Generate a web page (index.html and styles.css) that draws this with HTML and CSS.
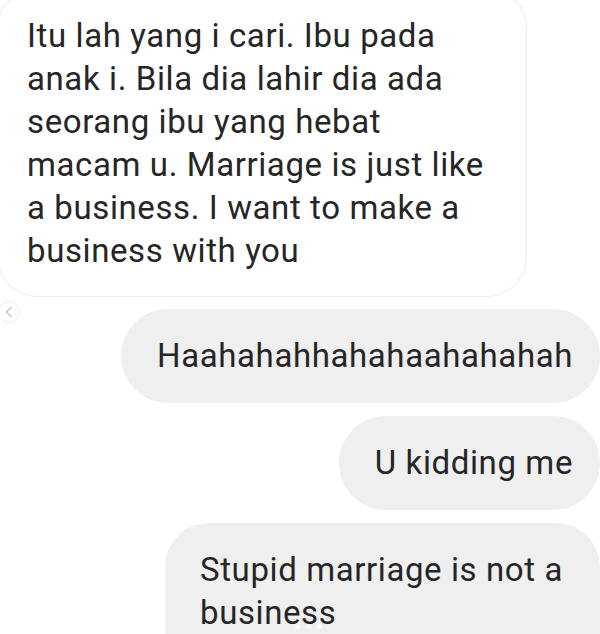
FILE: index.html
```html
<!DOCTYPE html>
<html>
<head>
<meta charset="utf-8">
<link rel="stylesheet" href="styles.css">
</head>
<body>
<div class="chat">
  <div class="msg-in">Itu lah yang i cari. Ibu pada<br>anak i. Bila dia lahir dia ada<br>seorang ibu yang hebat<br>macam u. Marriage is just like<br>a business. I want to make a<br>business with you</div>
  <div class="back"><svg width="10" height="12" viewBox="0 0 10 12"><path d="M7 1.5 L2.5 6 L7 10.5" fill="none" stroke="#c8c8c8" stroke-width="1.6" stroke-linecap="round" stroke-linejoin="round"/></svg></div>
  <div class="out-list">
    <div class="msg-out">Haahahahhahahaahahahah</div>
    <div class="msg-out">U kidding me</div>
    <div class="msg-out multi">Stupid marriage is not a<br>business</div>
  </div>
  <div class="dots"><span class="dot"></span><span class="dot"></span><span class="dot on"></span></div>
</div>
</body>
</html>
```
FILE: styles.css
```css
html, body {
  margin: 0;
  padding: 0;
  background: #ffffff;
  overflow: hidden;
}
.chat {
  position: relative;
  width: 600px;
  height: 634px;
  overflow: hidden;
  font-family: Roboto, "Noto Sans", sans-serif;
  font-size: 33px;
  letter-spacing: 0.6px;
  line-height: 43px;
  color: #262626;
}
.msg-in {
  box-sizing: border-box;
  width: 530px;
  margin: -12px 0 0 -3px;
  padding: 25px 20px 24px 29px;
  background: #ffffff;
  border: 1.5px solid #ebebeb;
  border-radius: 40px;
  white-space: nowrap;
}
.back {
  width: 20px;
  height: 20px;
  margin: 4px 0 0 -2px;
  border: 1.5px solid #ececec;
  border-radius: 50%;
  display: flex;
  align-items: center;
  justify-content: center;
}
.out-list {
  display: flex;
  flex-direction: column;
  align-items: flex-end;
  gap: 13px;
  margin-top: -14px;
}
.msg-out {
  background: #efefef;
  border-radius: 47px;
  padding: 25px 27px 26px 36px;
  white-space: nowrap;
}
.msg-out.multi {
  width: 373px;
  padding-left: 35px;
  padding-right: 27px;
  border-radius: 44px;
  padding-bottom: 40px;
}
.dots {
  position: absolute;
  left: 295px;
  top: 624px;
  display: flex;
  gap: 6px;
}
.dot {
  width: 5px;
  height: 5px;
  border-radius: 50%;
  background: rgba(255,255,255,0.5);
}
.dot.on {
  background: #ffffff;
}
```
